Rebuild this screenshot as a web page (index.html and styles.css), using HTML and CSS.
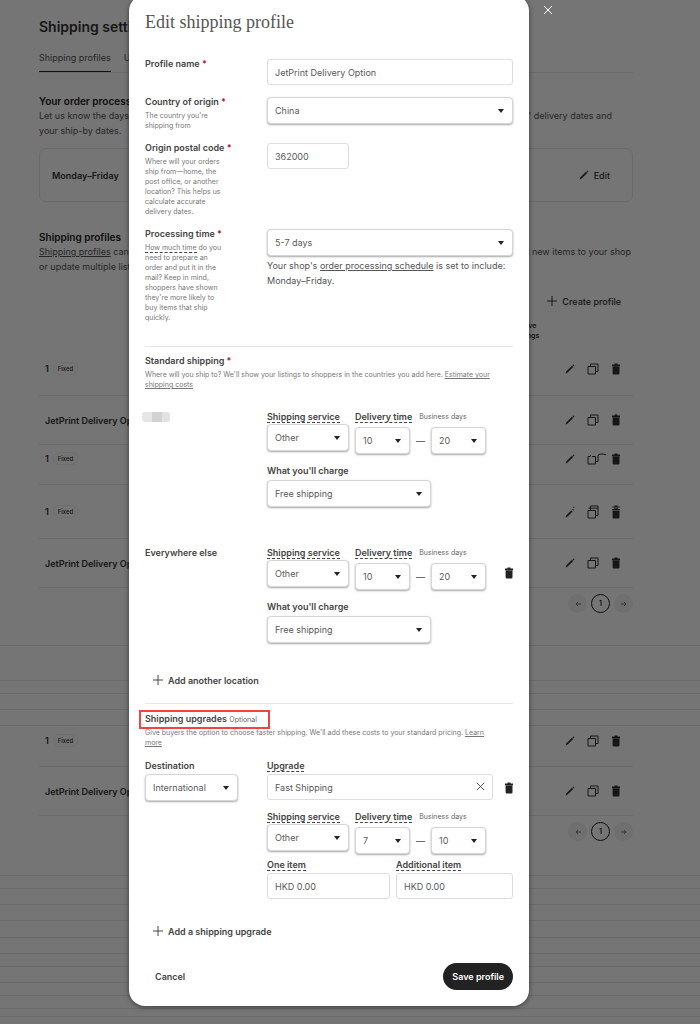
FILE: index.html
```html
<!DOCTYPE html>
<html lang="en">

<head>
    <meta charset="UTF-8">
    <meta name="viewport" content="width=device-width, initial-scale=1.0">
    <title>Shipping settings</title>
    <link rel="stylesheet" href="styles.css">
</head>

<body>
    <svg class="sprite" aria-hidden="true">
        <symbol id="pencil" viewBox="0 0 10 10">
            <path d="M.6 9.400l.6-1.900 5.800-5.800 1.200 1.200-5.800 5.800zM7.500 1.200l.6-.6c.5-.3 1.500.7 1.200 1.200l-.6.6z" />
        </symbol>
        <symbol id="pencil-cut" viewBox="0 0 10 12">
            <path d="M.6 11.400l.6-1.900 5.200-5.200 1.200 1.200-5.200 5.200zM7.200 3.400l.6-.6 1.200 1.200-.6.6zM8 1.200l.8-.6.6.7-.7.6z" />
        </symbol>
        <symbol id="copy" viewBox="0 0 12 12">
            <path class="line" d="M1 3.500h7.500V11H1zM3.500 3.500V1H11v7.500H8.500" />
        </symbol>
        <symbol id="copy-curl" viewBox="0 0 20 12">
            <path class="line" d="M3 3.500H1V11h7.500V3.500H5M3.500 3.500V2M8.500 8.500H11V3q0-2 3-2 3 0 5 .8" />
        </symbol>
        <symbol id="copy-double" viewBox="0 0 12 14">
            <path class="line" d="M1 5.500h7.500V13H1zM3.500 5.500V1H11v9.500H8.500M1.500 3.200H11" />
        </symbol>
        <symbol id="trash" viewBox="0 0 10 12">
            <path d="M1 1.500h2.500V.5h3v1H9v1.700H1zM1.600 3.600h6.900v6.700q0 1.200-1.200 1.200H2.800q-1.200 0-1.200-1.200z" />
        </symbol>
        <symbol id="trash-double" viewBox="0 0 10 14">
            <path d="M1.200 1.500h2.300V.5h3v1h2.300v1H1.200zM3 3.200h4v.9h2v1.200H1V4.100h2zM1.600 5.800h6.900v6.500q0 1.200-1.200 1.200H2.800q-1.200 0-1.200-1.200z" />
        </symbol>
        <symbol id="plus" viewBox="0 0 10 10">
            <path class="line" d="M5 0v10M0 5h10" />
        </symbol>
        <symbol id="cross" viewBox="0 0 10 10">
            <path class="line" d="M1 1l8 8M9 1l-8 8" />
        </symbol>
        <symbol id="arrow-left" viewBox="0 0 6 6">
            <path class="line" d="M6 3H1M3 1L1 3l2 2" />
        </symbol>
        <symbol id="arrow-right" viewBox="0 0 6 6">
            <path class="line" d="M0 3h5M3 1l2 2-2 2" />
        </symbol>
    </svg>

    <main class="page">
        <div class="content">
            <h1>Shipping settings</h1>
            <nav class="tabs">
                <a href="#" class="tab active">Shipping profiles</a>
                <a href="#" class="tab">Upgrades</a>
            </nav>

            <section class="intro">
                <h2>Your order processing schedule</h2>
                <p class="spread"><span>Let us know the days you</span><span>buyers' delivery dates and</span></p>
                <p>your ship-by dates.</p>
            </section>
            <div class="card">
                <strong>Monday–Friday</strong>
                <button class="link-button"><svg class="icon"><use href="#pencil" /></svg>Edit</button>
            </div>

            <section class="intro profiles">
                <h2>Shipping profiles</h2>
                <p class="spread wide"><span><a href="#">Shipping profiles</a> can be</span><span>add new items to your shop</span></p>
                <p>or update multiple listings.</p>
            </section>
            <div class="create">
                <button class="link-button"><svg class="icon"><use href="#plus" /></svg>Create profile</button>
            </div>
            <div class="list-head">Active<br>listings</div>

            <ul class="profile-list">
                <li class="tall">
                    <b>1</b><span class="pill">Fixed</span>
                    <span class="actions">
                        <button aria-label="Edit"><svg class="icon"><use href="#pencil" /></svg></button>
                        <button aria-label="Duplicate"><svg class="icon copy"><use href="#copy" /></svg></button>
                        <button aria-label="Delete"><svg class="icon trash"><use href="#trash" /></svg></button>
                    </span>
                </li>
                <li>
                    <b>JetPrint Delivery Option</b>
                    <span class="actions">
                        <button aria-label="Edit"><svg class="icon"><use href="#pencil" /></svg></button>
                        <button aria-label="Duplicate"><svg class="icon copy"><use href="#copy" /></svg></button>
                        <button aria-label="Delete"><svg class="icon trash"><use href="#trash" /></svg></button>
                    </span>
                </li>
                <li class="short">
                    <b>1</b><span class="pill">Fixed</span>
                    <span class="actions">
                        <button aria-label="Edit"><svg class="icon"><use href="#pencil" /></svg></button>
                        <button aria-label="Duplicate"><svg class="icon copy curl"><use href="#copy-curl" /></svg></button>
                        <button aria-label="Delete"><svg class="icon trash"><use href="#trash" /></svg></button>
                    </span>
                </li>
                <li class="tall">
                    <b>1</b><span class="pill">Fixed</span>
                    <span class="actions">
                        <button aria-label="Edit"><svg class="icon double"><use href="#pencil-cut" /></svg></button>
                        <button aria-label="Duplicate"><svg class="icon copy double"><use href="#copy-double" /></svg></button>
                        <button aria-label="Delete"><svg class="icon trash double"><use href="#trash-double" /></svg></button>
                    </span>
                </li>
                <li>
                    <b>JetPrint Delivery Option</b>
                    <span class="actions">
                        <button aria-label="Edit"><svg class="icon"><use href="#pencil" /></svg></button>
                        <button aria-label="Duplicate"><svg class="icon copy"><use href="#copy" /></svg></button>
                        <button aria-label="Delete"><svg class="icon trash"><use href="#trash" /></svg></button>
                    </span>
                </li>
            </ul>
            <div class="pager">
                <button aria-label="Previous"><svg><use href="#arrow-left" /></svg></button>
                <button class="current">1</button>
                <button aria-label="Next"><svg><use href="#arrow-right" /></svg></button>
            </div>
        </div>

        <div class="band first"></div>
        <div class="band small"></div>
        <div class="band"></div>
        <div class="band"></div>
        <div class="content lower">
            <ul class="profile-list">
                <li class="short">
                    <b>1</b><span class="pill">Fixed</span>
                    <span class="actions">
                        <button aria-label="Edit"><svg class="icon"><use href="#pencil" /></svg></button>
                        <button aria-label="Duplicate"><svg class="icon copy"><use href="#copy" /></svg></button>
                        <button aria-label="Delete"><svg class="icon trash"><use href="#trash" /></svg></button>
                    </span>
                </li>
                <li>
                    <b>JetPrint Delivery Option</b>
                    <span class="actions">
                        <button aria-label="Edit"><svg class="icon"><use href="#pencil" /></svg></button>
                        <button aria-label="Duplicate"><svg class="icon copy"><use href="#copy" /></svg></button>
                        <button aria-label="Delete"><svg class="icon trash"><use href="#trash" /></svg></button>
                    </span>
                </li>
            </ul>
            <div class="pager">
                <button aria-label="Previous"><svg><use href="#arrow-left" /></svg></button>
                <button class="current">1</button>
                <button aria-label="Next"><svg><use href="#arrow-right" /></svg></button>
            </div>
        </div>
        <div class="band small"></div>
        <div class="band"></div>
        <div class="band"></div>
        <div class="band large"></div>
        <div class="band"></div>
        <div class="band small"></div>
        <div class="band"></div>
        <div class="band small"></div>
        <div class="band small"></div>
        <div class="band tiny"></div>
    </main>

    <div class="overlay">
        <form class="modal" role="dialog" aria-labelledby="title">
            <h2 class="title" id="title">Edit shipping profile</h2>

            <div class="rows">
                <div class="row">
                    <div><label for="name">Profile name <i>*</i></label></div>
                    <input type="text" id="name" value="JetPrint Delivery Option">
                </div>
                <div class="row">
                    <div>
                        <label for="country">Country of origin <i>*</i></label>
                        <p class="help">The country you're<br>shipping from</p>
                    </div>
                    <div class="select"><select id="country"><option>China</option></select></div>
                </div>
                <div class="row">
                    <div>
                        <label for="postal">Origin postal code <i>*</i></label>
                        <p class="help">Where will your orders<br>ship from—home, the<br>post office, or another<br>location? This helps us<br>calculate accurate<br>delivery dates.</p>
                    </div>
                    <input type="text" id="postal" class="w-service" value="362000">
                </div>
                <div class="row">
                    <div>
                        <label for="processing">Processing time <i>*</i></label>
                        <p class="help"><span class="hint">How much time</span> do you<br>need to prepare an<br>order and put it in the<br>mail? Keep in mind,<br>shoppers have shown<br>they're more likely to<br>buy items that ship<br>quickly.</p>
                    </div>
                    <div>
                        <div class="select"><select id="processing"><option>5-7 days</option></select></div>
                        <p class="note">Your shop's <a href="#">order processing schedule</a> is set to include:<br>Monday–Friday.</p>
                    </div>
                </div>
            </div>

            <hr>
            <h3>Standard shipping <i>*</i></h3>
            <p class="help">Where will you ship to? We'll show your listings to shoppers in the countries you add here. <a href="#">Estimate your<br>shipping costs</a></p>

            <div class="row location">
                <div><span class="blank"></span></div>
                <div>
                    <div class="line-fields">
                        <div class="field w-service">
                            <label class="hint" for="service1">Shipping service</label>
                            <div class="select"><select id="service1"><option>Other</option></select></div>
                        </div>
                        <div class="field delivery">
                            <div class="delivery-head"><label class="hint" for="from1">Delivery time</label><small>Business days</small></div>
                            <div class="range">
                                <div class="select"><select id="from1"><option>10</option></select></div>
                                <span>—</span>
                                <div class="select"><select aria-label="Longest delivery time"><option>20</option></select></div>
                            </div>
                        </div>
                    </div>
                    <div class="charge">
                        <label for="charge1">What you'll charge</label>
                        <div class="select"><select id="charge1"><option>Free shipping</option></select></div>
                    </div>
                </div>
            </div>

            <div class="row location next">
                <div><h3>Everywhere else</h3></div>
                <div>
                    <div class="line-fields">
                        <div class="field w-service">
                            <label class="hint" for="service2">Shipping service</label>
                            <div class="select"><select id="service2"><option>Other</option></select></div>
                        </div>
                        <div class="field delivery">
                            <div class="delivery-head"><label class="hint" for="from2">Delivery time</label><small>Business days</small></div>
                            <div class="range">
                                <div class="select"><select id="from2"><option>10</option></select></div>
                                <span>—</span>
                                <div class="select"><select aria-label="Longest delivery time"><option>20</option></select></div>
                            </div>
                        </div>
                        <button type="button" class="remove" aria-label="Remove location"><svg class="icon trash"><use href="#trash" /></svg></button>
                    </div>
                    <div class="charge">
                        <label for="charge2">What you'll charge</label>
                        <div class="select"><select id="charge2"><option>Free shipping</option></select></div>
                    </div>
                </div>
            </div>

            <button type="button" class="link-button add"><svg class="icon"><use href="#plus" /></svg>Add another location</button>

            <hr class="second">
            <h3 class="marked">Shipping upgrades <small>Optional</small></h3>
            <p class="help close">Give buyers the option to choose faster shipping. We'll add these costs to your standard pricing. <a href="#">Learn<br>more</a></p>

            <div class="row upgrade">
                <div class="destination">
                    <label for="destination">Destination</label>
                    <div class="select"><select id="destination"><option>International</option></select></div>
                </div>
                <div>
                    <div class="name-line">
                        <div class="field upgrade-name">
                            <label class="hint" for="upgrade">Upgrade</label>
                            <input type="text" id="upgrade" value="Fast Shipping">
                            <button type="button" class="clear" aria-label="Clear"><svg class="icon"><use href="#cross" /></svg></button>
                        </div>
                        <button type="button" class="remove" aria-label="Remove upgrade"><svg class="icon trash"><use href="#trash" /></svg></button>
                    </div>
                    <div class="line-fields">
                        <div class="field w-service">
                            <label class="hint" for="service3">Shipping service</label>
                            <div class="select"><select id="service3"><option>Other</option></select></div>
                        </div>
                        <div class="field delivery">
                            <div class="delivery-head"><label class="hint" for="from3">Delivery time</label><small>Business days</small></div>
                            <div class="range">
                                <div class="select"><select id="from3"><option>7</option></select></div>
                                <span>—</span>
                                <div class="select"><select aria-label="Longest delivery time"><option>10</option></select></div>
                            </div>
                        </div>
                    </div>
                    <div class="prices">
                        <div class="field">
                            <label class="hint" for="one">One item</label>
                            <input type="text" id="one" value="HKD 0.00">
                        </div>
                        <div class="field">
                            <label class="hint" for="more">Additional item</label>
                            <input type="text" id="more" value="HKD 0.00">
                        </div>
                    </div>
                </div>
            </div>

            <button type="button" class="link-button add upgrade-add"><svg class="icon"><use href="#plus" /></svg>Add a shipping upgrade</button>

            <div class="footer">
                <button type="button" class="cancel">Cancel</button>
                <button type="submit" class="save">Save profile</button>
            </div>
        </form>
        <button class="dismiss" aria-label="Close"><svg class="icon"><use href="#cross" /></svg></button>
    </div>
</body>

</html>
```
FILE: styles.css
```css
* {
    box-sizing: border-box;
}

body {
    position: relative;
    margin: 0;
    min-height: 100vh;
    overflow-x: hidden;
    background-color: #fff;
    color: #333;
    font-family: Inter, "Liberation Sans", sans-serif;
    font-size: 9px;
    line-height: 15px;
}

h1, h2, h3, p, ul {
    margin: 0;
    padding: 0;
}

a {
    color: inherit;
}

button, input, select {
    font: inherit;
    color: inherit;
}

button {
    padding: 0;
    border: none;
    background: none;
    cursor: pointer;
}

.sprite {
    display: none;
}

.icon {
    display: block;
    width: 10px;
    height: 10px;
    fill: currentColor;
}

.line {
    fill: none;
    stroke: currentColor;
}

.icon.copy {
    width: 12px;
    height: 12px;
}

.icon.trash {
    width: 10px;
    height: 12px;
}

.icon.copy.curl {
    width: 20px;
    margin-right: -8px;
}

.icon.double {
    height: 14px;
}

/* settings page behind the dialog */
.content {
    padding: 17px 67px 0 39px;
}

h1 {
    font-size: 14px;
    font-weight: 600;
    line-height: 20px;
}

.tabs {
    display: flex;
    gap: 13px;
    margin-top: 13px;
    border-bottom: 1px solid #e8e8e8;
    color: #555;
}

.tab {
    height: 22px;
    text-decoration: none;
}

.tab.active {
    border-bottom: 1px solid #222;
}

.intro {
    margin-top: 21px;
    color: #555;
}

.intro h2 {
    color: #222;
    font-size: 10px;
    font-weight: 600;
    line-height: 14px;
}

.intro.profiles {
    margin-top: 28px;
}

.spread {
    display: flex;
    justify-content: space-between;
    padding-right: 21px;
    white-space: nowrap;
}

.spread.wide {
    padding-right: 2px;
}

.card {
    display: flex;
    align-items: center;
    justify-content: space-between;
    height: 54px;
    margin-top: 10px;
    padding: 0 22px 0 12px;
    border: 1px solid #e8e8e8;
    border-radius: 7px;
}

.card strong {
    font-weight: 600;
}

.link-button {
    display: flex;
    align-items: center;
    gap: 5px;
    height: 20px;
    font-weight: 500;
}

.create {
    display: flex;
    justify-content: flex-end;
    margin-top: 17px;
    padding-right: 12px;
}

.list-head {
    width: 26px;
    margin: 10px 92px 1px auto;
    font-size: 7px;
    font-weight: 600;
    line-height: 10px;
}

.profile-list {
    list-style: none;
}

.profile-list li {
    display: flex;
    align-items: center;
    gap: 4px;
    height: 49px;
    padding: 0 12px 0 6px;
    border-bottom: 1px solid #e8e8e8;
}

.profile-list li.tall {
    height: 54px;
}

.profile-list li.short {
    height: 40px;
    padding-bottom: 12px;
}

.profile-list b {
    font-weight: 600;
}

.pill {
    padding: 0 4px;
    border: 1px solid #f0f0f0;
    border-radius: 6px;
    font-size: 6px;
    font-weight: 500;
    line-height: 11px;
}

.actions {
    display: flex;
    align-items: center;
    gap: 12px;
    margin-left: auto;
}

.pager {
    display: flex;
    justify-content: flex-end;
    gap: 4px;
    margin-top: 6px;
}

.pager button {
    display: flex;
    align-items: center;
    justify-content: center;
    width: 19px;
    height: 19px;
    border-radius: 50%;
    background-color: #f2f2f2;
    color: #777;
}

.pager .current {
    border: 1px solid #222;
    background: none;
    color: #222;
    font-size: 7px;
    font-weight: 600;
}

.pager svg {
    width: 6px;
    height: 6px;
}

.band {
    height: 16px;
    border-bottom: 1px solid #e6e6e6;
}

.band.first {
    height: 36px;
    margin-top: 32px;
    border-top: 1px solid #e6e6e6;
}

.band.small {
    height: 13px;
}

.band.large {
    height: 17px;
}

.band.tiny {
    height: 8px;
}

.content.lower {
    padding-top: 1px;
    padding-bottom: 34px;
    border-bottom: 1px solid #e6e6e6;
}

/* dialog */
.overlay {
    position: absolute;
    inset: 0;
    display: flex;
    align-items: flex-start;
    justify-content: center;
    gap: 14px;
    padding-right: 18px;
    background-color: rgba(0, 0, 0, 0.54);
}

.modal {
    flex: 0 1 400px;
    margin-top: -5px;
    padding: 15px 16px 16px;
    border-radius: 16px;
    background-color: #fff;
    box-shadow: 0 1px 5px rgba(0, 0, 0, 0.5);
    color: #444;
}

.dismiss {
    margin-top: 5px;
    color: #fff;
}

.title {
    margin-bottom: 25px;
    color: #555;
    font-family: "Liberation Serif", serif;
    font-size: 18px;
    font-weight: 400;
    line-height: 24px;
}

.rows {
    display: grid;
    gap: 12px;
}

.row {
    display: grid;
    grid-template-columns: 106px 1fr;
    gap: 16px;
    align-items: start;
}

label, h3 {
    display: block;
    font-size: 9px;
    font-weight: 600;
    line-height: 10px;
}

i {
    color: #a61a2e;
    font-style: normal;
}

small {
    color: #666;
    font-size: 7px;
    font-weight: 400;
}

.help {
    margin-top: 4px;
    color: #777;
    font-size: 7px;
    line-height: 10px;
}

.help.close {
    margin-top: -1px;
}

.hint {
    border-bottom: 1px dashed #444;
}

.note {
    margin-top: 2px;
    color: #555;
}

input, select {
    display: block;
    width: 100%;
    height: 26px;
    padding: 0 7px;
    border: 1px solid #ddd;
    border-radius: 3px;
    outline: none;
    background-color: #fff;
    color: #595959;
}

select {
    height: 27px;
    border-color: #d6d6d6;
    border-radius: 4px;
    box-shadow: 0 1px 2px rgba(0, 0, 0, 0.35);
    appearance: none;
}

.select {
    position: relative;
}

.select::after {
    content: "";
    position: absolute;
    top: 12px;
    right: 9px;
    border: 3px solid transparent;
    border-top: 4px solid #222;
    border-bottom: none;
    pointer-events: none;
}

.w-service {
    width: 82px;
}

hr {
    margin: 23px 0 9px;
    border: none;
    border-top: 1px solid #e6e6e6;
}

.row.location {
    margin-top: 22px;
}

.row.location.next {
    margin-top: 41px;
}

.blank {
    display: block;
    width: 28px;
    height: 10px;
    margin-left: -3px;
    border-radius: 3px;
    background: linear-gradient(90deg, #e6e6e6 35%, #d2d2d2 35%, #d2d2d2 70%, #e2e2e2 70%);
}

.line-fields {
    display: flex;
    gap: 6px;
}

.field .hint {
    width: fit-content;
    margin-bottom: 1px;
}

.delivery-head {
    display: flex;
    gap: 7px;
    margin-bottom: 3px;
    line-height: 10px;
    white-space: nowrap;
}

.range {
    display: grid;
    grid-template-columns: 55px 21px 55px;
    align-items: center;
    text-align: center;
}

.charge {
    width: 164px;
    margin-top: 12px;
}

.charge label {
    margin-bottom: 4px;
}

.remove {
    align-self: flex-end;
    height: 12px;
    margin: 0 -1px 11px auto;
    color: #222;
}

.add {
    margin-top: 27px;
    padding-left: 8px;
    font-weight: 600;
}

.second {
    margin: 13px 0 6px;
}

.marked {
    width: fit-content;
    margin-left: -6px;
    padding: 2px 11px 2px 4px;
    border: 2px solid #ee4444;
}

.row.upgrade {
    margin-top: 13px;
}

.destination {
    width: 93px;
}

.destination label {
    margin-bottom: 3px;
}

.name-line {
    display: flex;
    gap: 11px;
    margin-bottom: 12px;
}

.upgrade-name {
    position: relative;
    flex: 1;
}

.upgrade-name .hint, .prices .hint {
    margin-bottom: 2px;
}

.name-line .remove {
    margin-bottom: 6px;
}

.clear {
    position: absolute;
    right: 8px;
    bottom: 9px;
}

.clear .icon {
    width: 9px;
    height: 9px;
}

.prices {
    display: grid;
    grid-template-columns: 123px 1fr;
    gap: 6px;
    margin-top: 6px;
}

.upgrade-add {
    margin-top: 22px;
}

.footer {
    display: flex;
    align-items: center;
    justify-content: space-between;
    margin-top: 22px;
    padding-left: 10px;
    font-weight: 600;
}

.save {
    height: 27px;
    padding: 0 9px;
    border-radius: 14px;
    background-color: #222;
    color: #fff;
}
```
